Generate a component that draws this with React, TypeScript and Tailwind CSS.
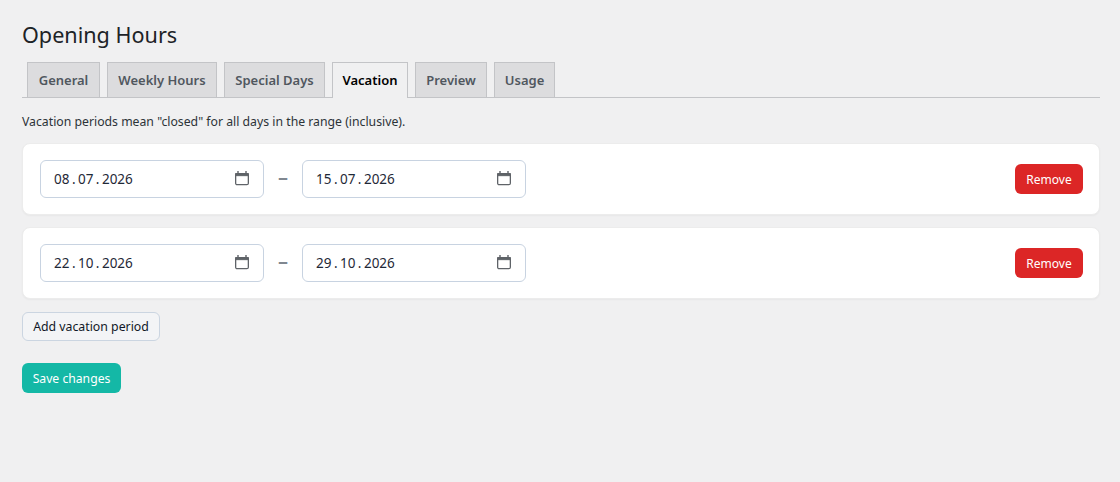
import React from 'react'

const tabs = [
  { label: 'General', width: 'w-[73px]' },
  { label: 'Weekly Hours', width: 'w-[110px]' },
  { label: 'Special Days', width: 'w-[101px]' },
  { label: 'Vacation', width: 'w-[76px]' },
  { label: 'Preview', width: 'w-[72px]' },
  { label: 'Usage', width: 'w-[61px]' },
]

const periods = [
  { from: ['08', '07', '2026'], to: ['15', '07', '2026'] },
  { from: ['22', '10', '2026'], to: ['29', '10', '2026'] },
]

const CalendarIcon = () => (
  <svg width="16" height="16" viewBox="0 0 16 16" className="text-[#5f6368]" fill="none" stroke="currentColor">
    <rect x="1.65" y="2.65" width="12.7" height="11" rx="1.5" strokeWidth="1.3" />
    <rect x="1.65" y="2.65" width="12.7" height="2" fill="currentColor" strokeWidth="1" />
    <path d="M4 0v3M12 0v3" strokeWidth="1.4" />
  </svg>
)

const DateField = ({ parts }: { parts: string[] }) => (
  <div className="flex h-[38px] w-[224px] items-center justify-between rounded-md border border-[#c8d3e1] bg-white px-[13px]">
    <span className="flex font-['Noto_Sans',sans-serif] text-[13.5px] text-[#1f2937]">
      {parts[0]}
      <span className="w-[8.5px] text-center">.</span>
      {parts[1]}
      <span className="w-[8.5px] text-center">.</span>
      {parts[2]}
    </span>
    <CalendarIcon />
  </div>
)

export default function App() {
  return (
    <div className="min-h-[482px] bg-[#f0f0f1] pl-[22px] pr-[20px] pt-[20px] font-['Noto_Sans',sans-serif] text-[#1d2327]">
      <h1 className="text-[21.6px] leading-[29px]">Opening Hours</h1>

      <div className="mt-[13px] flex h-[36px] gap-[7px] border-b border-[#c3c4c7] pl-[5px]">
        {tabs.map((tab) => (
          <div
            key={tab.label}
            className={
              tab.label === 'Vacation'
                ? `${tab.width} flex h-[36px] items-center justify-center border border-b-0 border-[#c3c4c7] bg-[#f0f0f1] pt-[1px] text-[13px] font-semibold text-black`
                : `${tab.width} flex h-[35px] items-center justify-center border border-b-0 border-[#c3c4c7] bg-[#dcdcde] pt-[1px] text-[13px] font-semibold text-[#50575e]`
            }
          >
            {tab.label}
          </div>
        ))}
      </div>

      <p className="mt-[15px] text-[12.25px] leading-[18px] text-[#2c3338]">
        Vacation periods mean "closed" for all days in the range (inclusive).
      </p>

      <div className="mt-[12px] flex flex-col gap-[12px]">
        {periods.map((period) => (
          <div
            key={period.from.join('.')}
            className="flex h-[72px] items-center justify-between rounded-lg border border-[#ececec] bg-white pl-[17px] pr-[16px] shadow-[0_1px_2px_rgba(0,0,0,0.04)]"
          >
            <div className="flex items-center">
              <DateField parts={period.from} />
              <span className="mb-[4px] w-[38px] text-center text-[20px] font-semibold leading-[20px] text-[#808790]">–</span>
              <DateField parts={period.to} />
            </div>
            <button className="h-[30px] w-[68px] rounded-md bg-[#dc2626] pt-[1px] text-[12px] text-white">Remove</button>
          </div>
        ))}
      </div>

      <button className="mt-[13px] block h-[29px] w-[138px] rounded-md border border-[#cbd5e1] bg-[#f3f4f6] pt-[1px] text-[12.3px] text-[#111827]">
        Add vacation period
      </button>

      <button className="mt-[22px] block h-[30px] w-[99px] rounded-md bg-[#14b8a6] pt-[2px] text-[12.2px] text-white">
        Save changes
      </button>
    </div>
  )
}
